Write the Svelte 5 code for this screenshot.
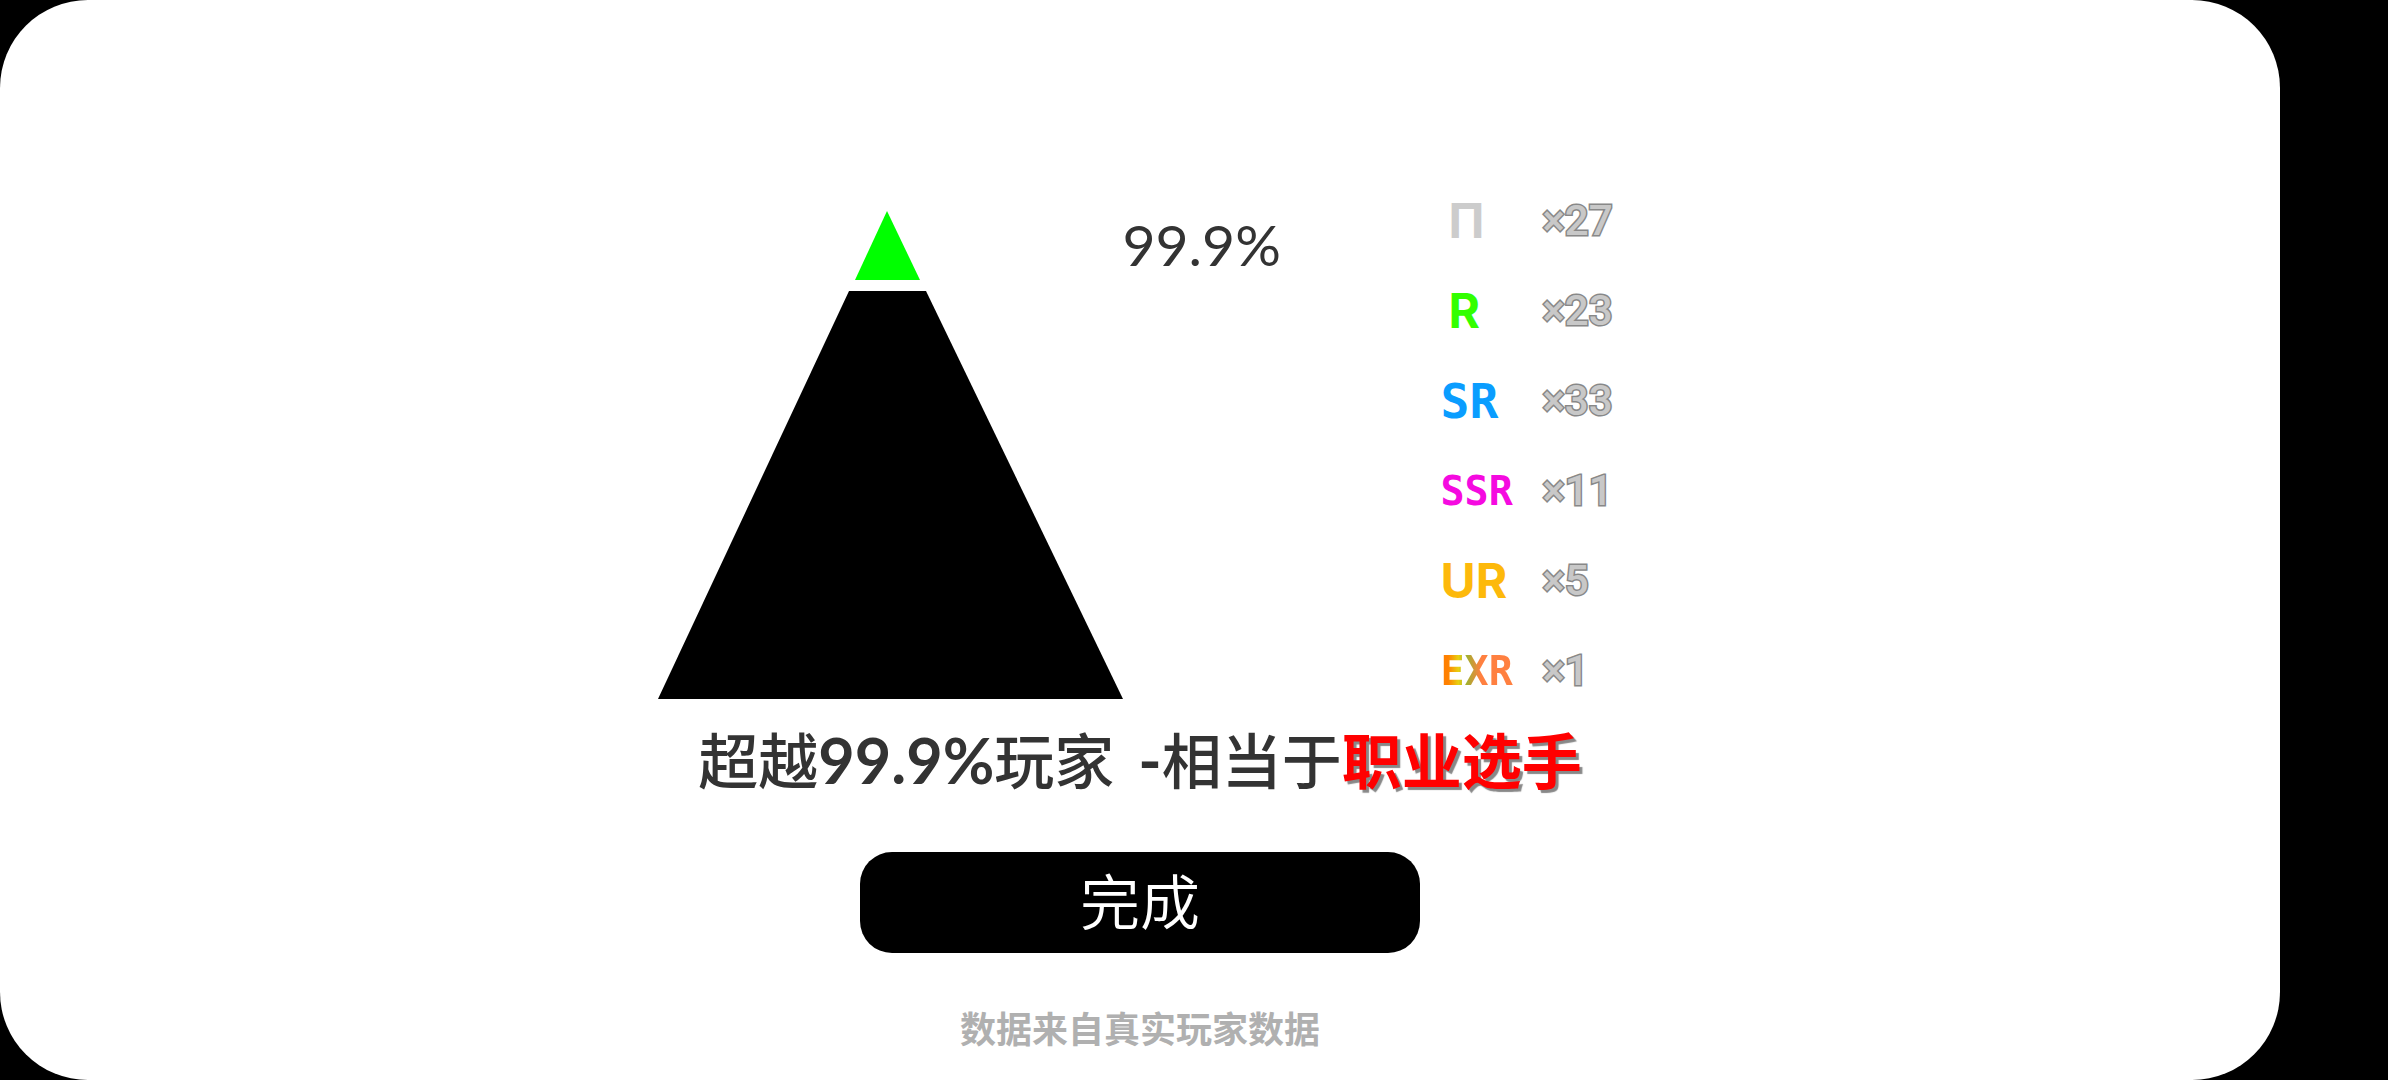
<script lang="ts">
  const percent = '99.9%';

  const rarities = [
    { name: 'П', cls: 'n', count: 27 },
    { name: 'R', cls: 'r', count: 23 },
    { name: 'SR', cls: 'sr', count: 33 },
    { name: 'SSR', cls: 'ssr', count: 11 },
    { name: 'UR', cls: 'ur', count: 5 },
    { name: 'EXR', cls: 'exr', count: 1 },
  ];
</script>

<main class="result">
  <section class="stats">
    <svg class="pyramid" viewBox="0 0 465 488" aria-hidden="true">
      <polygon points="229,0 262,69 197,69" fill="#00ff00" />
      <polygon points="191,80 268,80 465,488 0,488" fill="#000" />
    </svg>
    <span class="percent">{percent}</span>
    <ul class="rarities">
      {#each rarities as rarity}
        <li>
          <span class="name {rarity.cls}">{rarity.name}</span>
          <span class="count">×{rarity.count}</span>
        </li>
      {/each}
    </ul>
  </section>

  <h1 class="summary">
    <span>超越<span class="figure">{percent}</span>玩家</span>
    <span><span class="figure">-</span>相当于<strong>职业选手</strong></span>
  </h1>

  <button class="done" type="button">完成</button>

  <p class="source">数据来自真实玩家数据</p>
</main>

<style>
  :global(body) {
    background: #000;
  }

  .result {
    display: flex;
    flex-direction: column;
    align-items: center;
    box-sizing: border-box;
    min-height: 100vh;
    margin-right: 108px;
    padding: 176px 24px 16px;
    border-radius: 88px;
    background: #fff;
    color: #333;
    font-family: 'Noto Sans CJK SC', sans-serif;
  }

  .stats {
    display: flex;
    align-items: flex-start;
  }

  .pyramid {
    width: 465px;
    margin-top: 35px;
  }

  .percent {
    width: 318px;
    padding-top: 32px;
    font-family: Lato, sans-serif;
    font-size: 57px;
    line-height: 72px;
  }

  .rarities {
    margin: 0;
    padding: 0;
    list-style: none;
  }

  .rarities li {
    display: flex;
    align-items: center;
    height: 90px;
  }

  .name {
    width: 72px;
    margin-right: 30px;
    font-family: Inter, sans-serif;
    font-size: 48px;
    font-weight: 700;
    line-height: 60px;
  }

  .n,
  .r {
    box-sizing: border-box;
    padding-left: 8px;
  }

  .n {
    color: #ccc;
  }

  .r {
    color: #33ff00;
  }

  .sr {
    color: #0a9dff;
  }

  .ssr {
    color: #f50ae0;
  }

  .ur {
    color: #fdb90b;
  }

  .sr,
  .ssr,
  .exr {
    font-family: 'DejaVu Sans Mono', monospace;
  }

  .ssr,
  .exr {
    font-size: 40px;
  }

  .exr {
    background: linear-gradient(90deg, #ff8000 10%, #e8d010 24%, #a0b030 36%, #ff8040 55%);
    background-clip: text;
    color: transparent;
  }

  .count {
    width: 80px;
    color: #c8c8c8;
    font-family: Roboto, sans-serif;
    font-size: 42px;
    font-weight: 500;
    line-height: 60px;
    paint-order: stroke;
    -webkit-text-stroke: 3px #888;
  }

  .summary {
    display: flex;
    gap: 24px;
    margin: 0;
    font-size: 60px;
    font-weight: 500;
    line-height: 84px;
  }

  .figure {
    font-family: Lato, sans-serif;
    font-size: 63px;
    font-weight: 700;
    line-height: 60px;
  }

  .summary strong {
    color: #f00;
    font-weight: 700;
    text-shadow: 3px 3px 1px #888;
  }

  .done {
    width: 560px;
    height: 101px;
    margin-top: 52px;
    padding: 0 0 8px;
    border: 0;
    border-radius: 32px;
    background: #000;
    color: #fff;
    font-family: inherit;
    font-size: 60px;
    font-weight: 350;
    line-height: 84px;
    cursor: pointer;
  }

  .source {
    margin: 50px 0 0;
    color: #b0b0b0;
    font-size: 36px;
    font-weight: 700;
    line-height: 48px;
  }
</style>
